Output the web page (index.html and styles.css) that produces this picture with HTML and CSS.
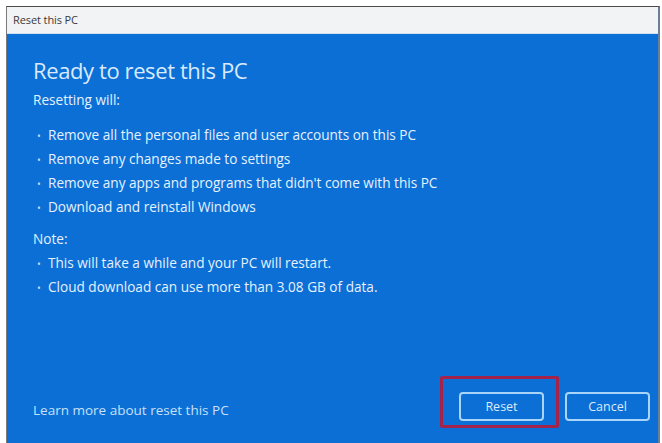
FILE: index.html
```html
<!DOCTYPE html>
<html>
<head>
<meta charset="utf-8">
<link rel="stylesheet" href="styles.css">
</head>
<body>
<div class="window">
  <div class="titlebar">Reset this PC</div>
  <div class="content">
    <h1 class="heading">Ready to reset this PC</h1>
    <p class="label">Resetting will:</p>
    <ul class="list">
      <li><span class="dot">•</span>Remove all the personal files and user accounts on this PC</li>
      <li><span class="dot">•</span>Remove any changes made to settings</li>
      <li><span class="dot">•</span>Remove any apps and programs that didn't come with this PC</li>
      <li><span class="dot">•</span>Download and reinstall Windows</li>
    </ul>
    <p class="label note">Note:</p>
    <ul class="list">
      <li><span class="dot">•</span>This will take a while and your PC will restart.</li>
      <li><span class="dot">•</span>Cloud download can use more than 3.08 GB of data.</li>
    </ul>
    <div class="footer">
      <span class="link">Learn more about reset this PC</span>
      <div class="buttons">
        <div class="btn-wrap">
          <button class="btn">Reset</button>
          <span class="highlight"></span>
        </div>
        <button class="btn">Cancel</button>
      </div>
    </div>
  </div>
</div>
</body>
</html>
```
FILE: styles.css
```css
html, body {
  margin: 0;
  padding: 0;
  background: #ffffff;
  font-family: "Open Sans", "Noto Sans", sans-serif;
}
body {
  width: 662px;
  height: 443px;
  overflow: hidden;
}
.window {
  margin: 6px 0 0 6px;
  width: 654px;
  height: 437px;
  box-sizing: border-box;
  border-top: 1px solid #4a4a4a;
  border-left: 1px solid #7a7a7a;
  border-right: 2px solid #6a7f95;
  display: flex;
  flex-direction: column;
}
.titlebar {
  height: 26px;
  flex: none;
  background: #f2f3f5;
  border-bottom: 1px solid #cfe0ef;
  color: #3a3a3a;
  font-size: 11px;
  line-height: 26px;
  padding-left: 6px;
  letter-spacing: -0.1px;
}
.content {
  flex: 1;
  background: #0b6fd6;
  padding: 21px 0 0 26px;
  display: flex;
  flex-direction: column;
  color: #e6f1fc;
}
.heading {
  margin: 0;
  font-weight: 400;
  font-size: 22px;
  line-height: 30px;
  color: #d8eafb;
  letter-spacing: -0.4px;
}
.label {
  margin: 3px 0 0 0;
  font-size: 13.6px;
  line-height: 24px;
}
.list {
  list-style: none;
  margin: 11px 0 0 0;
  padding: 0 0 0 4px;
  font-size: 13.6px;
  line-height: 24px;
}
.list li {
  display: flex;
  height: 24px;
}
.list + .note {
  margin-top: 8px;
}
.note + .list {
  margin-top: 0;
}
.dot {
  flex: none;
  width: 11px;
  padding-top: 1px;
  font-size: 10px;
  color: #c8def6;
}
.footer {
  margin-top: auto;
  display: flex;
  justify-content: space-between;
  align-items: flex-start;
  padding: 0 8px 22px 0;
}
.link {
  padding-top: 9px;
  font-size: 13.5px;
  color: #c9e0f8;
}
.buttons {
  display: flex;
  gap: 21px;
}
.btn-wrap {
  position: relative;
}
.btn {
  width: 85px;
  height: 29px;
  box-sizing: border-box;
  background: #0b6fd6;
  border: 2px solid #a9d6f8;
  border-radius: 4px;
  color: #dcebfb;
  font-family: "Open Sans", "Noto Sans", sans-serif;
  font-size: 12.5px;
  padding: 0;
  display: block;
}
.highlight {
  position: absolute;
  left: -19px;
  right: -15px;
  top: -16px;
  bottom: -7px;
  border: 3px solid #a3234a;
  border-radius: 2px;
}
```
